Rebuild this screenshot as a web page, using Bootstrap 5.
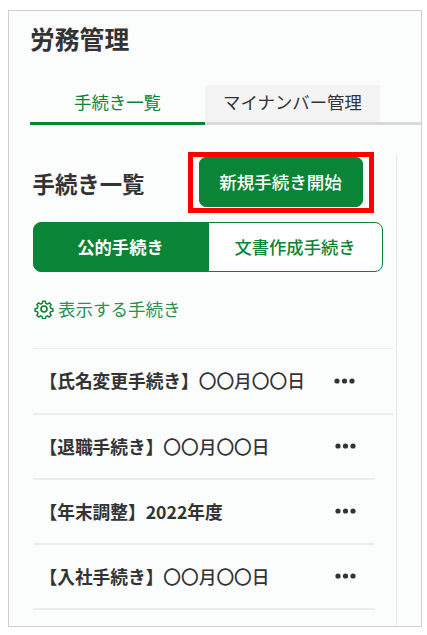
<!DOCTYPE html>
<html lang="ja">
<head>
<meta charset="utf-8">
<title>労務管理</title>
<link href="https://cdn.jsdelivr.net/npm/bootstrap@5.3.0/dist/css/bootstrap.min.css" rel="stylesheet">
<style>
html,body{height:100%;background:#fff;}
body{font-family:"Noto Sans CJK JP","Liberation Sans",sans-serif;color:#333;overflow:hidden;}
.frame{margin:10px 5px 0 8px;height:617px;border:1.5px solid #d0d0d0;background:#fbfcfc;overflow:hidden;}
.page-title{font-size:24.8px;font-weight:700;line-height:34px;margin:10px 0 0 21px;color:#333;}
.tabbar{margin:30px 0 0 21px;border-bottom:3px solid #d9d9d9;height:40px;}
.tabbar .tab-item{width:175px;height:40px;display:flex;align-items:center;justify-content:center;font-size:17.4px;padding-bottom:3px;color:#333;text-decoration:none;}
.tabbar .tab-item.on{color:#0a8437;border-bottom:3px solid #0a8437;}
.tabbar .tab-item.off{background:#f4f4f4;border-bottom:3px solid #d9d9d9;}
.body-split{height:502px;margin-top:29px;}
.main-col{width:387.5px;border-right:1.5px solid #e6e8e8;flex:none;}
.head-row{margin:-2px 0 0 23.5px;height:61px;}
.sec-title{font-size:22.4px;font-weight:700;width:155px;line-height:32px;margin:0;color:#333;}
.callout{border:5px solid #f00;padding:0 6px;height:61px;width:186px;display:flex;align-items:flex-start;}
.new-btn{--bs-btn-bg:#0a8437;--bs-btn-border-color:#0a8437;--bs-btn-hover-bg:#0a8437;--bs-btn-hover-border-color:#0a8437;--bs-btn-color:#fff;--bs-btn-hover-color:#fff;width:165px;height:50px;border-radius:7px;font-size:17.5px;font-weight:500;padding:0;}
.seg{margin:9px 0 0 23.5px;width:350px;height:50px;}
.seg .btn{--bs-btn-border-color:#0a8437;--bs-btn-hover-border-color:#0a8437;--bs-btn-border-radius:8px;font-size:17.3px;padding:0;line-height:46px;}
.seg .seg-on{--bs-btn-bg:#0a8437;--bs-btn-color:#fff;--bs-btn-hover-bg:#0a8437;--bs-btn-hover-color:#fff;font-weight:700;width:176px;flex:none;}
.seg .seg-off{--bs-btn-bg:#fff;--bs-btn-color:#0a8437;--bs-btn-hover-bg:#fff;--bs-btn-hover-color:#0a8437;font-weight:500;}
.filter-link{margin:23px 0 0 25px;color:#2e8f54;font-size:17.5px;line-height:28px;text-decoration:none;}
.list-wrap{margin:25px 0 0 23.5px;}
.proc-list{--bs-list-group-bg:transparent;--bs-list-group-border-color:#ececec;--bs-list-group-border-width:2px;--bs-list-group-color:#333;border-radius:0;}
.proc-list .list-group-item{height:65px;padding:0 0 0 7px;font-size:17.7px;font-weight:700;display:flex;align-items:center;justify-content:space-between;border-left:0;border-right:0;margin-right:21px;}
.proc-list .list-group-item:first-child{border-top:1.5px solid #ececec;margin-right:3px;height:66.5px;}
.proc-list .list-group-item:first-child .dots{margin-right:38px;}
.proc-list .thin{font-weight:500;}
.dots{width:21px;margin-right:19px;flex:none;display:block;}
</style>
</head>
<body>
<div class="frame">
  <h1 class="page-title">労務管理</h1>
  <nav class="tabbar d-flex">
    <a class="tab-item on" href="#">手続き一覧</a>
    <a class="tab-item off" href="#">マイナンバー管理</a>
  </nav>
  <div class="body-split d-flex">
    <div class="main-col">
      <div class="head-row d-flex align-items-center">
        <h2 class="sec-title">手続き一覧</h2>
        <div class="callout"><button type="button" class="btn new-btn">新規手続き開始</button></div>
      </div>
      <div class="seg btn-group d-flex" role="group">
        <button type="button" class="btn seg-on">公的手続き</button>
        <button type="button" class="btn seg-off">文書作成手続き</button>
      </div>
      <a class="filter-link d-flex align-items-center gap-1" href="#">
        <svg width="20" height="20" viewBox="0 0 24 24" fill="none" stroke="#0a8437" stroke-width="2" stroke-linejoin="round"><circle cx="12" cy="12" r="3.6"/><path d="M10.2 2h3.6l.6 3 2.3 1 2.6-1.7 2.5 2.5-1.7 2.6 1 2.3 3 .6v3.4l-3 .6-1 2.3 1.7 2.6-2.5 2.5-2.6-1.7-2.3 1-.6 3h-3.6l-.6-3-2.3-1-2.6 1.7-2.5-2.5 1.7-2.6-1-2.3-3-.6v-3.4l3-.6 1-2.3-1.7-2.6 2.5-2.5 2.6 1.7 2.3-1z" transform="translate(12 12) scale(.88) translate(-12 -12.7)"/></svg>
        <span>表示する手続き</span>
      </a>
      <div class="list-wrap">
        <ul class="list-group proc-list">
          <li class="list-group-item"><span>【氏名変更手続き】<span class="thin">〇〇月〇〇日</span></span><svg class="dots" height="6" viewBox="0 0 21 6" fill="#333"><circle cx="3" cy="3" r="2.6"/><circle cx="10.5" cy="3" r="2.6"/><circle cx="18" cy="3" r="2.6"/></svg></li>
          <li class="list-group-item"><span>【退職手続き】<span class="thin">〇〇月〇〇日</span></span><svg class="dots" height="6" viewBox="0 0 21 6" fill="#333"><circle cx="3" cy="3" r="2.6"/><circle cx="10.5" cy="3" r="2.6"/><circle cx="18" cy="3" r="2.6"/></svg></li>
          <li class="list-group-item"><span>【年末調整】2022年度</span><svg class="dots" height="6" viewBox="0 0 21 6" fill="#333"><circle cx="3" cy="3" r="2.6"/><circle cx="10.5" cy="3" r="2.6"/><circle cx="18" cy="3" r="2.6"/></svg></li>
          <li class="list-group-item"><span>【入社手続き】<span class="thin">〇〇月〇〇日</span></span><svg class="dots" height="6" viewBox="0 0 21 6" fill="#333"><circle cx="3" cy="3" r="2.6"/><circle cx="10.5" cy="3" r="2.6"/><circle cx="18" cy="3" r="2.6"/></svg></li>
        </ul>
      </div>
    </div>
  </div>
</div>
<script src="https://cdn.jsdelivr.net/npm/bootstrap@5.3.0/dist/js/bootstrap.bundle.min.js"></script>
</body>
</html>
